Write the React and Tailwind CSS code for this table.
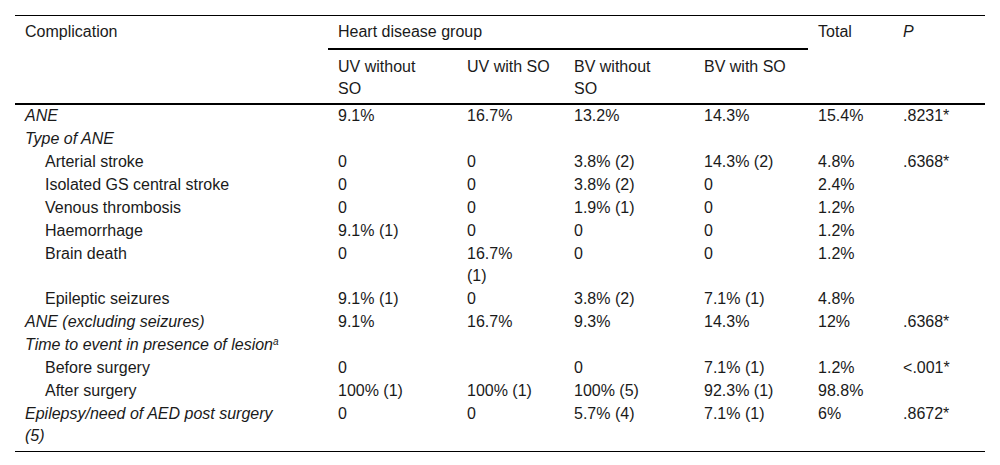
import React from "react";

const rows = [
  { label: "ANE", italic: true, cells: ["9.1%", "16.7%", "13.2%", "14.3%", "15.4%", ".8231*"] },
  { label: "Type of ANE", italic: true, cells: ["", "", "", "", "", ""] },
  { label: "Arterial stroke", indent: true, cells: ["0", "0", "3.8% (2)", "14.3% (2)", "4.8%", ".6368*"] },
  { label: "Isolated GS central stroke", indent: true, cells: ["0", "0", "3.8% (2)", "0", "2.4%", ""] },
  { label: "Venous thrombosis", indent: true, cells: ["0", "0", "1.9% (1)", "0", "1.2%", ""] },
  { label: "Haemorrhage", indent: true, cells: ["9.1% (1)", "0", "0", "0", "1.2%", ""] },
  { label: "Brain death", indent: true, cells: ["0", ["16.7%", "(1)"], "0", "0", "1.2%", ""] },
  { label: "Epileptic seizures", indent: true, cells: ["9.1% (1)", "0", "3.8% (2)", "7.1% (1)", "4.8%", ""] },
  { label: "ANE (excluding seizures)", italic: true, cells: ["9.1%", "16.7%", "9.3%", "14.3%", "12%", ".6368*"] },
  { label: "Time to event in presence of lesion", italic: true, sup: "a", cells: ["", "", "", "", "", ""] },
  { label: "Before surgery", indent: true, cells: ["0", "", "0", "7.1% (1)", "1.2%", "<.001*"] },
  { label: "After surgery", indent: true, cells: ["100% (1)", "100% (1)", "100% (5)", "92.3% (1)", "98.8%", ""] },
  { label: ["Epilepsy/need of AED post surgery", "(5)"], italic: true, cells: ["0", "0", "5.7% (4)", "7.1% (1)", "6%", ".8672*"] },
];

function Lines({ v }) {
  if (!Array.isArray(v)) return v;
  return v.map((s, k) => (
    <React.Fragment key={k}>
      {k > 0 && <br />}
      {s}
    </React.Fragment>
  ));
}

export default function App() {
  return (
    <div className="w-[1000px] h-[465px] bg-white pt-[15px] px-[15px] text-[#1a1a1a] text-[16px] leading-[22px]" style={{ fontFamily: "Arial, 'Liberation Sans', sans-serif" }}>
      <table className="w-[970px] table-fixed border-collapse">
        <colgroup>
          <col className="w-[313px]" />
          <col className="w-[129px]" />
          <col className="w-[107px]" />
          <col className="w-[130px]" />
          <col className="w-[114px]" />
          <col className="w-[85px]" />
          <col className="w-[92px]" />
        </colgroup>
        <thead className="border-t border-black">
          <tr>
            <th rowSpan={2} className="px-[10px] pt-[5px] align-top text-left font-normal">Complication</th>
            <th colSpan={4} className="px-[10px] pt-[5px] pb-[5px] align-top text-left font-normal">
              Heart disease group
            </th>
            <th rowSpan={2} className="px-[10px] pt-[5px] align-top text-left font-normal">Total</th>
            <th rowSpan={2} className="px-[10px] pt-[5px] align-top text-left font-normal italic">P</th>
          </tr>
          <tr className="border-t-2 border-black">
            <th className="px-[10px] pt-[6px] pb-[3px] align-top text-left font-normal">UV without<br />SO</th>
            <th className="px-[10px] pt-[6px] pb-[3px] align-top text-left font-normal">UV with SO</th>
            <th className="px-[10px] pt-[6px] pb-[3px] align-top text-left font-normal">BV without<br />SO</th>
            <th className="px-[10px] pt-[6px] pb-[3px] align-top text-left font-normal">BV with SO</th>
          </tr>
        </thead>
        <tbody className="border-t-2 border-b border-black">
          {rows.map((r, i) => (
            <tr key={i}>
              <td
                className={
                  "align-top py-[0.5px] pr-[10px] " +
                  (r.indent ? "pl-[30px] " : "pl-[10px] ") +
                  (r.italic ? "italic " : "") +
                  (i === 0 ? "pt-0 " : "") +
                  (i === rows.length - 1 ? "pb-[4px]" : "")
                }
              >
                <Lines v={r.label} />
                {r.sup && <sup className="text-[10px] leading-none">{r.sup}</sup>}
              </td>
              {r.cells.map((c, j) => (
                <td
                  key={j}
                  className={
                    "align-top py-[0.5px] px-[10px] " +
                    (i === 0 ? "pt-0 " : "") +
                    (i === rows.length - 1 ? "pb-[4px]" : "")
                  }
                >
                  <Lines v={c} />
                </td>
              ))}
            </tr>
          ))}
        </tbody>
      </table>
    </div>
  );
}
